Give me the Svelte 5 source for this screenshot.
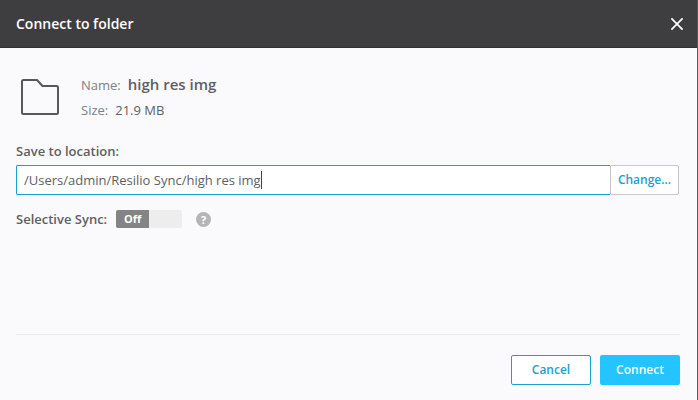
<script>
  import { onMount } from 'svelte';

  let folder = { name: 'high res img', size: '21.9 MB' };
  let location = '/Users/admin/Resilio Sync/high res img';
  let selectiveSync = false;

  let locationInput;
  let caretLeft = 0;

  // the caret sits right after the typed path
  function placeCaret() {
    const style = getComputedStyle(locationInput);
    const ctx = document.createElement('canvas').getContext('2d');
    ctx.font = `${style.fontWeight} ${style.fontSize} ${style.fontFamily}`;
    caretLeft = Math.round(
      ctx.measureText(location).width + parseFloat(style.paddingLeft) + parseFloat(style.borderLeftWidth)
    );
  }

  onMount(() => {
    placeCaret();
    locationInput.focus();
  });
</script>

<main class="dialog">
  <header>
    <h1>Connect to folder</h1>
    <button class="close" aria-label="Close">
      <svg width="14" height="14" viewBox="0 0 14 14">
        <path d="M1.4 1.4L12.6 12.6M12.6 1.4L1.4 12.6" fill="none" stroke="#fff" stroke-width="1.7" />
      </svg>
    </button>
  </header>

  <section class="content">
    <div class="folder">
      <svg width="40" height="38" viewBox="0 0 40 38">
        <path
          d="M3.5 2H17L22.5 8H36.5Q38 8 38 9.5V34.5Q38 36 36.5 36H3.5Q2 36 2 34.5V3.5Q2 2 3.5 2Z"
          fill="none"
          stroke="#58585a"
          stroke-width="2"
          stroke-linejoin="round"
        />
      </svg>
      <dl>
        <div class="info">
          <dt>Name:</dt>
          <dd class="name">{folder.name}</dd>
        </div>
        <div class="info">
          <dt>Size:</dt>
          <dd>{folder.size}</dd>
        </div>
      </dl>
    </div>

    <label class="title" for="location">Save to location:</label>
    <div class="location">
      <div class="field">
        <input
          id="location"
          type="text"
          spellcheck="false"
          bind:this={locationInput}
          bind:value={location}
          on:input={placeCaret}
        />
        <span class="caret" style="left: {caretLeft}px"></span>
      </div>
      <button class="change">Change...</button>
    </div>

    <div class="sync">
      <label class="title" for="selective">Selective Sync:</label>
      <span class="switch" class:on={selectiveSync}>
        <input id="selective" type="checkbox" bind:checked={selectiveSync} />
        <span class="knob">{selectiveSync ? 'On' : 'Off'}</span>
      </span>
      <button class="help" aria-label="Help">?</button>
    </div>
  </section>

  <footer>
    <button class="cancel">Cancel</button>
    <button class="connect">Connect</button>
  </footer>
</main>

<style>
  :global(body) {
    margin: 0;
    background: #fafafc;
  }

  .dialog {
    display: flex;
    flex-direction: column;
    box-sizing: border-box;
    min-height: 100vh;
    border-right: 1px solid #58585a;
    background: #fafafc;
    color: #606062;
    font-family: "Open Sans", sans-serif;
    font-size: 13px;
    line-height: 20px;
  }

  button,
  input {
    box-sizing: border-box;
    margin: 0;
    font: inherit;
  }

  button {
    padding: 0;
    border: none;
    cursor: pointer;
  }

  header {
    display: flex;
    align-items: center;
    justify-content: space-between;
    box-sizing: border-box;
    height: 48px;
    padding: 0 10px 0 16px;
    background: #3e3e40;
    border-bottom: 1px solid #343136;
  }

  h1 {
    margin: 0;
    color: #fff;
    font-size: 14px;
    font-weight: 600;
  }

  .close {
    display: flex;
    align-items: center;
    justify-content: center;
    width: 20px;
    height: 20px;
    background: none;
  }

  .content {
    flex: 1;
    padding: 26px 17px 0 16px;
  }

  .folder {
    display: flex;
    align-items: flex-start;
    gap: 21px;
    margin-bottom: 15px;
    padding-left: 4px;
  }

  .folder svg {
    margin-top: 4px;
  }

  dl {
    margin: 0;
  }

  .info {
    display: flex;
    align-items: baseline;
    gap: 7px;
    height: 26px;
  }

  dt {
    color: #808083;
  }

  dd {
    margin: 0;
  }

  .name {
    font-size: 15px;
    font-weight: 600;
  }

  .title {
    font-weight: 600;
  }

  .location {
    display: flex;
    margin: 4px 1px 0 0;
  }

  .field {
    position: relative;
    flex: 1;
  }

  .field input {
    display: block;
    width: 100%;
    height: 30px;
    padding: 0 7px;
    border: 1px solid #1ba1ce;
    border-right: none;
    border-radius: 2px 0 0 2px;
    outline: none;
    background: #fff;
    color: #606062;
    caret-color: transparent;
  }

  .caret {
    position: absolute;
    top: 6px;
    width: 1px;
    height: 18px;
    background: #444;
  }

  .change {
    width: 69px;
    height: 30px;
    border: 1px solid #c8c8ca;
    border-radius: 0 2px 2px 0;
    background: #fff;
    color: #1ba1ce;
    font-size: 12px;
    font-weight: 600;
  }

  .sync {
    display: flex;
    align-items: center;
    margin-top: 14px;
  }

  .switch {
    position: relative;
    display: flex;
    width: 66px;
    height: 18px;
    margin: 0 14px 0 9px;
    border-radius: 2px;
    background: #ededed;
    overflow: hidden;
  }

  .switch.on {
    justify-content: flex-end;
  }

  .switch input {
    position: absolute;
    inset: 0;
    width: 100%;
    height: 100%;
    opacity: 0;
    cursor: pointer;
  }

  .knob {
    width: 33px;
    background: #848484;
    color: #fff;
    font-size: 11px;
    font-weight: 700;
    line-height: 18px;
    text-align: center;
  }

  .help {
    width: 15px;
    height: 15px;
    border-radius: 50%;
    background: #b5b5b5;
    color: #fff;
    font-size: 11px;
    font-weight: 700;
    line-height: 15px;
  }

  footer {
    display: flex;
    justify-content: flex-end;
    gap: 9px;
    margin: 0 17px 0 16px;
    padding: 20px 0 15px;
    border-top: 1px solid #ebebed;
  }

  footer button {
    width: 80px;
    height: 30px;
    border-radius: 2px;
    font-size: 12px;
    font-weight: 600;
  }

  .cancel {
    border: 1px solid #1ba1ce;
    background: #fff;
    color: #1ba1ce;
  }

  .connect {
    background: #23c4ff;
    color: #fff;
  }
</style>
